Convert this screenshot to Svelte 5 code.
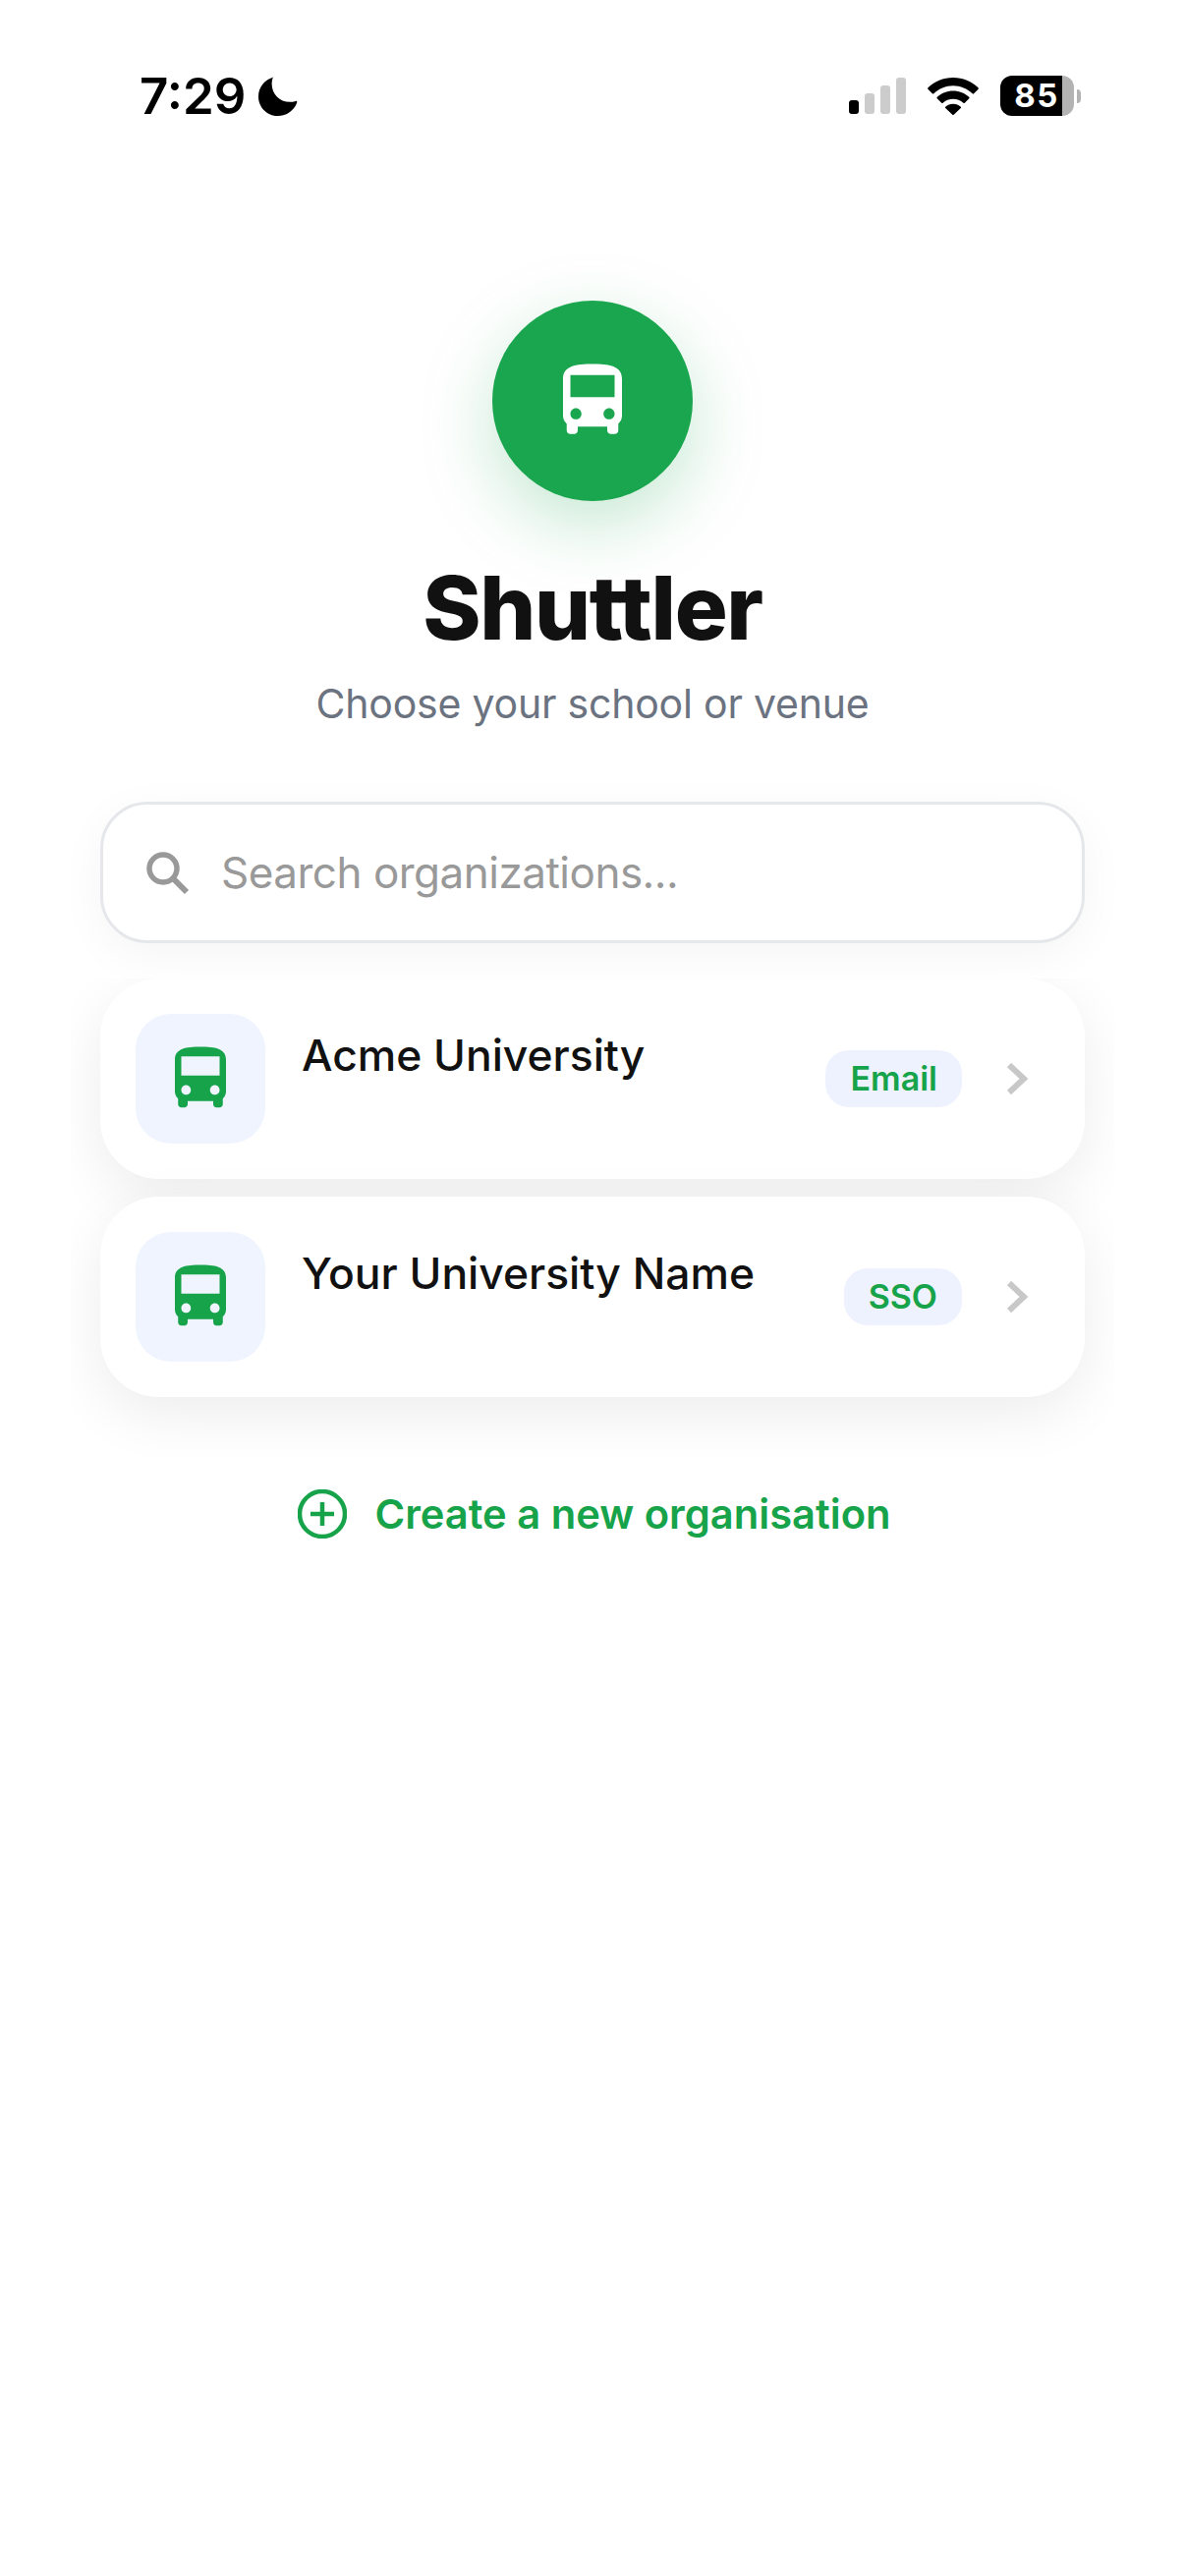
<script>
  const busPath =
    'M4 16c0 .88.39 1.67 1 2.22V20c0 .55.45 1 1 1h1c.55 0 1-.45 1-1v-1h8v1c0 .55.45 1 1 1h1c.55 0 1-.45 1-1v-1.78c.61-.55 1-1.34 1-2.22V6c0-3.5-3.58-4-8-4s-8 .5-8 4v10zm3.5 1c-.83 0-1.5-.67-1.5-1.5S6.67 14 7.5 14s1.5.67 1.5 1.5S8.33 17 7.5 17zm9 0c-.83 0-1.5-.67-1.5-1.5s.67-1.5 1.5-1.5 1.5.67 1.5 1.5-.67 1.5-1.5 1.5zm1.5-6H6V5h12v6z';

  const orgs = [
    { name: 'Acme University', auth: 'Email' },
    { name: 'Your University Name', auth: 'SSO' }
  ];
</script>

<div class="screen">
  <!-- iOS status bar -->
  <header class="status">
    <div class="clock">
      <span class="time">7:29</span>
      <svg class="moon" viewBox="0 0 40 40" aria-hidden="true">
        <path d="M15.5 0.6C6.4 3 0 11 0 20.4 0 31.2 8.8 40 19.8 40c8.8 0 16.4-5.6 19.4-13.6.4-1-.4-1.8-1.4-1.5-2 .6-3.8.9-5.8.9-10.4 0-18.4-8-18.4-18.6 0-2 .3-3.8.9-5.5.3-.8-.3-1.4-1-1.2z" fill="#000" />
      </svg>
    </div>
    <div class="indicators">
      <div class="signal">
        <span class="bar on"></span>
        <span class="bar b2"></span>
        <span class="bar b3"></span>
        <span class="bar b4"></span>
      </div>
      <svg class="wifi" viewBox="0 0 52 38" aria-hidden="true">
        <path d="M26 0c10 0 19 3.900 25.600 10.300.4.400.4 1 0 1.400l-4.500 4.600c-.4.400-1 .4-1.400 0C40.500 11.300 33.600 8.200 26 8.200S11.500 11.300 6.300 16.300c-.4.400-1 .4-1.400 0L.4 11.700c-.4-.4-.4-1 0-1.400C7 3.900 16 0 26 0z" />
        <path d="M26 13.400c6.300 0 12 2.400 16.300 6.400.4.400.4 1 0 1.400l-4.500 4.600c-.4.400-1 .4-1.400 0-2.800-2.600-6.400-4.100-10.400-4.100s-7.600 1.500-10.400 4.100c-.4.400-1 .4-1.400 0l-4.500-4.600c-.4-.4-.4-1 0-1.400C14 15.800 19.700 13.400 26 13.400z" />
        <path d="M26 26.800c3 0 5.700 1 7.800 2.900.4.400.4 1 0 1.400l-7.100 6.600c-.4.400-1 .4-1.400 0l-7.100-6.600c-.4-.4-.4-1 0-1.400 2.100-1.900 4.800-2.900 7.800-2.900z" />
      </svg>
      <div class="battery">
        <div class="cell"><span class="level">85</span></div>
        <span class="nub"></span>
      </div>
    </div>
  </header>

  <main class="content">
    <div class="logo">
      <svg viewBox="0 0 24 24" aria-hidden="true"><path d={busPath} fill="#fff" /></svg>
    </div>
    <h1>Shuttler</h1>
    <p class="subtitle">Choose your school or venue</p>

    <div class="search">
      <svg class="search-icon" viewBox="0 0 46 46" aria-hidden="true">
        <circle cx="19" cy="19" r="14" fill="none" stroke="#999" stroke-width="5.500" />
        <path d="M29 29 L43 43" stroke="#999" stroke-width="6" fill="none" />
      </svg>
      <span class="placeholder">Search organizations...</span>
    </div>

    <ul class="orgs">
      {#each orgs as org}
        <li class="org">
          <div class="tile">
            <svg viewBox="0 0 24 24" aria-hidden="true"><path d={busPath} fill="#16a34a" /></svg>
          </div>
          <span class="name">{org.name}</span>
          <span class="badge">{org.auth}</span>
          <svg class="chevron" viewBox="0 0 24 36" aria-hidden="true">
            <path d="M4 4 L19 18 L4 32" fill="none" stroke="#c8c8c8" stroke-width="6" />
          </svg>
        </li>
      {/each}
    </ul>

    <div class="create">
      <svg viewBox="0 0 50 50" aria-hidden="true">
        <circle cx="25" cy="25" r="23" fill="none" stroke="#16a34a" stroke-width="4.500" />
        <path d="M13 25 H37 M25 13 V37" fill="none" stroke="#16a34a" stroke-width="4.500" />
      </svg>
      <span>Create a new organisation</span>
    </div>
  </main>
</div>

<style>
  :global(body) {
    margin: 0;
    background: #fff;
  }

  .screen {
    width: 1206px;
    height: 2622px;
    overflow: hidden;
    background: #fff;
    font-family: Inter, "Liberation Sans", sans-serif;
    color: #111;
  }

  /* status bar */
  .status {
    display: flex;
    justify-content: space-between;
    align-items: center;
    height: 39px;
    padding: 78px 106px 0 142px;
  }
  .clock {
    display: flex;
    align-items: center;
    gap: 13px;
  }
  .time {
    font-size: 51px;
    font-weight: 600;
    line-height: 39px;
    color: #000;
  }
  .moon {
    width: 40px;
    height: 40px;
  }
  .indicators {
    display: flex;
    align-items: center;
    gap: 22px;
  }
  .signal {
    display: flex;
    align-items: flex-end;
    gap: 6px;
    height: 37px;
  }
  .bar {
    width: 10px;
    border-radius: 3px;
    background: #ccc;
  }
  .bar.on {
    height: 14px;
    background: #000;
  }
  .bar.b2 {
    height: 21px;
  }
  .bar.b3 {
    height: 29px;
  }
  .bar.b4 {
    height: 37px;
  }
  .wifi {
    width: 52px;
    height: 38px;
  }
  .battery {
    display: flex;
    align-items: center;
    gap: 3px;
  }
  .cell {
    width: 75px;
    height: 41px;
    border-radius: 12px;
    background: linear-gradient(to right, #000 84%, #b3b3b3 84%);
  }
  .level {
    display: block;
    width: 74px;
    text-align: center;
    color: #fff;
    font-size: 33px;
    font-weight: 700;
    letter-spacing: 1.500px;
    line-height: 41px;
  }
  .nub {
    width: 4px;
    height: 14px;
    border-radius: 0 4px 4px 0;
    background: #b3b3b3;
  }

  /* header block */
  .content {
    display: flex;
    flex-direction: column;
    align-items: center;
    padding-top: 189px;
  }
  .logo {
    display: flex;
    align-items: center;
    justify-content: center;
    width: 204px;
    height: 204px;
    border-radius: 50%;
    background: #1aa64e;
    box-shadow: 0 24px 72px rgba(22, 163, 74, 0.25);
  }
  .logo svg {
    width: 90px;
    height: 90px;
  }
  h1 {
    margin: 61px 0 0;
    font-size: 90px;
    font-weight: 800;
    line-height: 96px;
    letter-spacing: -1.400px;
    color: #111;
  }
  .subtitle {
    margin: 22px 0 0;
    font-size: 41px;
    letter-spacing: -0.200px;
    line-height: 54px;
    color: #6b7280;
  }

  /* search */
  .search {
    display: flex;
    align-items: center;
    box-sizing: border-box;
    width: 1002px;
    height: 144px;
    margin-top: 73px;
    padding-left: 42px;
    gap: 32px;
    border: 3px solid #e5e7eb;
    border-radius: 48px;
    background: #fff;
    box-shadow: 0 12px 48px rgba(0, 0, 0, 0.045);
  }
  .search-icon {
    width: 46px;
    height: 46px;
  }
  .placeholder {
    font-size: 44px;
    letter-spacing: -0.500px;
    color: #999;
  }

  /* organisation list, clipped the way a scroll view clips its shadows */
  .orgs {
    display: flex;
    flex-direction: column;
    gap: 18px;
    box-sizing: border-box;
    width: 1062px;
    margin: 36px 0 0;
    padding: 0 30px 60px;
    list-style: none;
    overflow: hidden;
  }
  .org {
    display: flex;
    align-items: center;
    box-sizing: border-box;
    height: 204px;
    padding: 0 57px 0 36px;
    border-radius: 60px;
    background: #fff;
    box-shadow: 0 18px 60px rgba(0, 0, 0, 0.075);
  }
  .tile {
    display: flex;
    align-items: center;
    justify-content: center;
    flex: none;
    width: 132px;
    height: 132px;
    border-radius: 36px;
    background: #eff4ff;
  }
  .tile svg {
    width: 78px;
    height: 78px;
  }
  .name {
    flex: 1;
    align-self: flex-start;
    margin: 51px 0 0 37px;
    font-size: 44.400px;
    font-weight: 550;
    line-height: 54px;
    color: #111;
  }
  .badge {
    padding: 0 25px;
    height: 58px;
    border-radius: 24px;
    background: #eef2ff;
    color: #16a34a;
    font-size: 34px;
    font-weight: 600;
    line-height: 58px;
  }
  .chevron {
    width: 24px;
    height: 36px;
    margin-left: 44px;
  }

  /* footer link */
  .create {
    display: flex;
    align-items: center;
    gap: 28px;
    margin: 34px 0 0 4px;
    color: #16a34a;
    font-size: 41.700px;
    font-weight: 600;
  }
  .create svg {
    width: 50px;
    height: 50px;
  }
</style>
